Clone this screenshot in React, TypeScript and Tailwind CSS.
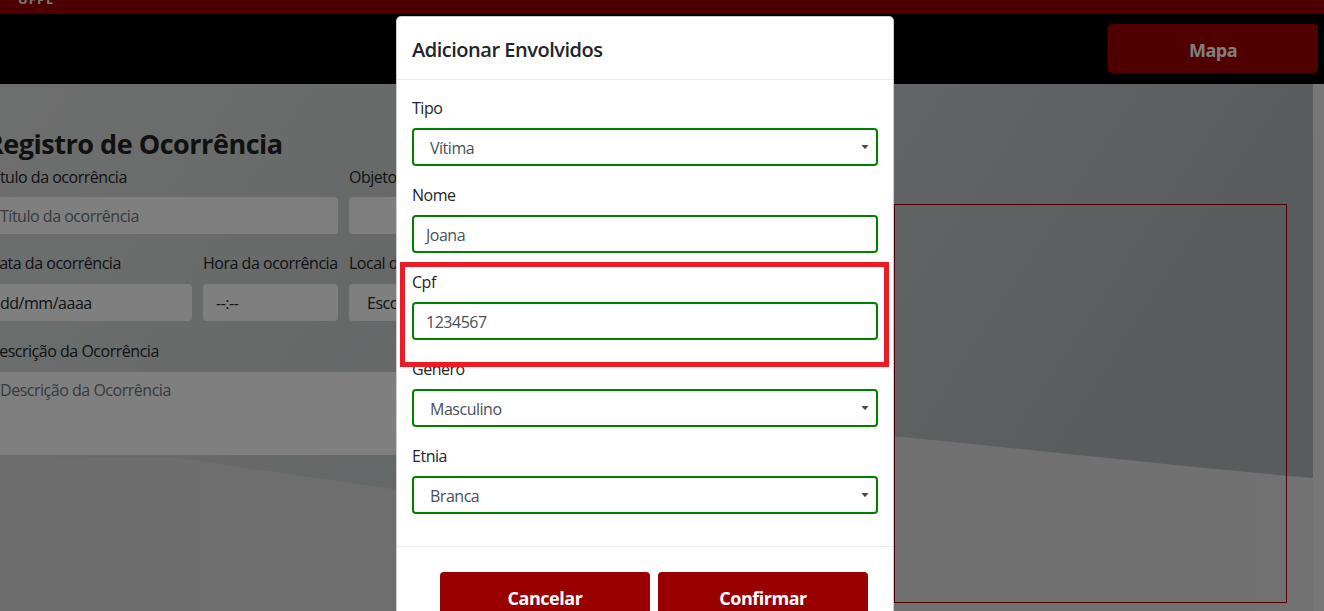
import React from "react";

function Arrow() {
  return (
    <svg width="8" height="5" viewBox="0 0 8 5" className="absolute right-[7px] top-1/2 -translate-y-1/2">
      <path d="M0.5 0.5 H7.5 L4 4.8 Z" fill="#4a4a4a" />
    </svg>
  );
}

function FieldSelect({ label, value }: { label: string; value: string }) {
  return (
    <div className="mb-[17px]">
      <div className="text-[16px] leading-[24px] text-[#212529] mb-[8px]">{label}</div>
      <div className="relative h-[38px] border-2 border-[#008000] rounded-[4px] flex items-center pl-[16px] pt-[2px] text-[16px] text-[#495057]">
        {value}
        <Arrow />
      </div>
    </div>
  );
}

function FieldInput({ label, value }: { label: string; value: string }) {
  return (
    <div className="mb-[17px]">
      <div className="text-[16px] leading-[24px] text-[#212529] mb-[8px]">{label}</div>
      <div className="h-[38px] border-2 border-[#008000] rounded-[4px] flex items-center pl-[12px] pt-[1px] text-[16px] text-[#495057]">
        {value}
      </div>
    </div>
  );
}

export default function App() {
  return (
    <div className="relative w-[1324px] h-[611px] overflow-hidden font-['Open_Sans',sans-serif] tracking-[-0.03em]">
      {/* page underneath */}
      <div className="flex flex-col h-full">
        <div className="h-[14px] bg-[#990000] overflow-hidden">
          <span className="block mt-[-11px] ml-[18px] text-[13px] font-bold leading-[20px] tracking-[1px] text-[#f2f2f2]">
            UFPE
          </span>
        </div>
        <div className="h-[70px] bg-black flex justify-end items-start pt-[10px] pr-[6px]">
          <div className="w-[210px] h-[49px] bg-[#a00000] rounded-[4px] flex items-center justify-center pt-[3px] text-white font-bold text-[18px]">
            Mapa
          </div>
        </div>
        <div className="relative flex-1 flex">
          <svg className="absolute inset-0" width="1324" height="527" viewBox="0 0 1324 527" preserveAspectRatio="none">
            <defs>
              <linearGradient id="up" x1="0" y1="0" x2="1" y2="0.2">
                <stop offset="0" stopColor="#dcdddd" />
                <stop offset="0.35" stopColor="#cfd3d3" />
                <stop offset="0.68" stopColor="#c2caca" />
                <stop offset="1" stopColor="#b0b8b9" />
              </linearGradient>
              <linearGradient id="low" x1="0" y1="0" x2="1" y2="0">
                <stop offset="0" stopColor="#dadada" />
                <stop offset="1" stopColor="#e4e4e4" />
              </linearGradient>
            </defs>
            <rect x="0" y="0" width="1324" height="527" fill="url(#low)" />
            <path d="M0 0 H1324 V395 C1150 380 1000 362 890 352 C700 370 520 400 400 406 C300 392 220 380 170 373 H0 Z" fill="url(#up)" />
          </svg>
          <div className="relative flex-1 flex gap-[11px]">
            {/* left form */}
            <div className="w-[895px] ml-[-12px] shrink-0 text-[#212529]">
              <div className="mt-[43px] mb-[4px] ml-[-2px] text-[27px] leading-[34px] font-bold text-[#222]">
                Registro de Ocorrência
              </div>
              <div className="flex gap-[11px]">
                <div className="w-[350px]">
                  <div className="text-[16px] leading-[24px] mb-[8px]">Título da ocorrência</div>
                  <div className="h-[37px] bg-white rounded-[4px] flex items-center pl-[12px] text-[16px] text-[#6c757d]">
                    Título da ocorrência
                  </div>
                </div>
                <div className="flex-1">
                  <div className="text-[16px] leading-[24px] mb-[8px]">Objeto da ocorrência</div>
                  <div className="h-[37px] bg-white rounded-[4px]" />
                </div>
              </div>
              <div className="flex gap-[11px] mt-[17px]">
                <div className="w-[204px]">
                  <div className="text-[16px] leading-[24px] mb-[9px] whitespace-nowrap">Data da ocorrência</div>
                  <div className="h-[37px] bg-white rounded-[4px] flex items-center pl-[12px] text-[16px] text-[#212529]">
                    dd/mm/aaaa
                  </div>
                </div>
                <div className="w-[135px]">
                  <div className="text-[16px] leading-[24px] mb-[9px] whitespace-nowrap">Hora da ocorrência</div>
                  <div className="h-[37px] bg-white rounded-[4px] flex items-center pl-[13px] text-[16px] text-[#212529]">
                    --:--
                  </div>
                </div>
                <div className="flex-1">
                  <div className="text-[16px] leading-[24px] mb-[9px] whitespace-nowrap">Local da ocorrência</div>
                  <div className="h-[37px] bg-white rounded-[4px] flex items-center pl-[18px] text-[16px] text-[#212529]">
                    Escolha um local
                  </div>
                </div>
              </div>
              <div className="mt-[18px] text-[16px] leading-[24px] mb-[9px]">Descrição da Ocorrência</div>
              <div className="h-[83px] bg-white pl-[12px] pt-[6px] text-[16px] text-[#6c757d]">
                Descrição da Ocorrência
              </div>
            </div>
            {/* right map box */}
            <div className="w-[393px] shrink-0 pt-[120px]">
              <div className="h-[399px] border border-[#a00000]" />
            </div>
          </div>
          <div className="relative w-[11px] bg-[#efefef]" />
        </div>
      </div>

      {/* backdrop */}
      <div className="absolute inset-0 bg-black/50" />

      {/* modal */}
      <div className="absolute left-[396px] top-[16px] w-[498px] h-[640px] bg-white border border-black/20 rounded-[5px]">
        <div className="px-[15px] pt-[18px] pb-[14px] border-b border-[#e9ecef]">
          <div className="text-[20px] leading-[30px] font-semibold text-[#212529]">Adicionar Envolvidos</div>
        </div>
        <div className="px-[15px] pt-[16px] pb-[16px]">
          <FieldSelect label="Tipo" value="Vítima" />
          <FieldInput label="Nome" value="Joana" />
          <FieldInput label="Cpf" value="1234567" />
          <FieldSelect label="Genero" value="Masculino" />
          <div className="-mb-[1px]">
            <FieldSelect label="Etnia" value="Branca" />
          </div>
        </div>
        <div className="border-t border-[#e9ecef] pt-[25px] pl-[43px] flex gap-[8px]">
          <div className="w-[210px] h-[52px] bg-[#990000] rounded-[4px] flex items-center justify-center text-white font-bold text-[18px]">
            Cancelar
          </div>
          <div className="w-[210px] h-[52px] bg-[#990000] rounded-[4px] flex items-center justify-center text-white font-bold text-[18px]">
            Confirmar
          </div>
        </div>
      </div>

      {/* red annotation */}
      <div className="absolute left-[400px] top-[262px] w-[489px] h-[105px] border-[5px] border-[#ed1c24]" />
    </div>
  );
}
